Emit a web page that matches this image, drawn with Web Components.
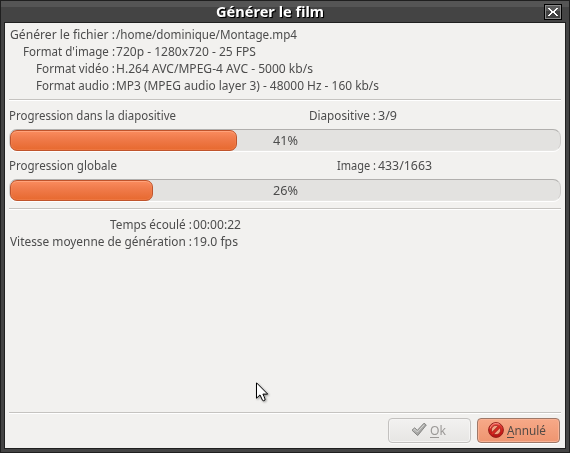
<!DOCTYPE html>
<html lang="fr">
<head>
<meta charset="utf-8">
<title>Générer le film</title>
<style>
html,body{margin:0;width:570px;height:453px;overflow:hidden}
body{font:13px/17px "Noto Sans","Open Sans",sans-serif;color:#4c4c4c}
</style>
</head>
<body>
<render-dialog></render-dialog>
<script>
const define = (name, html, setup) => customElements.define(name, class extends HTMLElement {
  connectedCallback() {
    if (this.shadowRoot) return;
    this.attachShadow({mode: 'open'}).innerHTML = html;
    if (setup) setup.call(this, this.shadowRoot);
  }
});

/* A line of text condensed or widened to a given width. */
define('fit-text', `<style>
:host{display:block;white-space:pre;height:17px;flex:none}
span{display:inline-block;transform-origin:0 0;white-space:pre}
u{text-decoration:none;box-shadow:0 -1px 0 currentColor inset;display:inline-block;height:16px}
</style><span></span>`, function (root) {
  const span = root.querySelector('span');
  const text = this.getAttribute('text');
  if (this.hasAttribute('mnemonic')) {
    const u = document.createElement('u');
    u.textContent = text[0];
    span.append(u, text.slice(1));
  } else span.textContent = text;
  const w = +this.getAttribute('w');
  this.style.width = w + 'px';
  span.style.transform = `scaleX(${w / span.getBoundingClientRect().width})`;
});

define('h-rule', `<style>:host{display:block;height:1px;background:#c5c3c0;border-bottom:1px solid #fff;flex:none}</style>`);

define('info-row', `<style>
:host{display:flex;height:17px;gap:1px}
div{width:var(--label,106px);display:flex;justify-content:flex-end}
</style><div><slot name="label"></slot></div><slot></slot>`);

define('progress-track', `<style>
:host{display:grid;height:22px;box-sizing:border-box;border-radius:8px;background:#e3e2e0;
 border:1px solid #cfcdcb;border-top-color:#b1afad;border-bottom-color:#e6e5e3;box-shadow:0 1px 0 #fff;align-items:center}
i{grid-area:1/1;box-sizing:border-box;height:21px;margin:0;width:var(--fill);border:1px solid #c0542b;border-radius:7px;
 background:linear-gradient(#fa8c5e,#f07b4b 40%,#e7692f);box-shadow:inset 0 1px 0 #ffa27a,inset 0 0 0 1px #f5895a66}
div{grid-area:1/1;justify-self:center;padding-left:1px}
</style><i></i><div><slot></slot></div>`, function () {
  this.style.setProperty('--fill', this.getAttribute('fill') + 'px');
});

define('close-button', `<style>
:host{display:block;box-sizing:border-box;width:18px;height:16px;border:1px solid #000;background:#8b8b8b;padding:1px}
div{height:12px;background:linear-gradient(#5a5a5a 0 5px,#414141 5px);display:grid;place-items:center}
svg{display:block}
</style><div><svg width="10" height="8" viewBox="0 0 10 8" fill="#fff" shape-rendering="crispEdges"><path d="M0 0h2v1h1v1h1v1h2V2h1V1h1V0h2v1H9v1H8v1H7v2h1v1h1v1h1v1H8V7H7V6H6V5H4v1H3v1H2v1H0V7h1V6h1V5h1V3H2V2H1V1H0z"/></svg></div>`);

define('push-button', `<style>
:host{display:flex;box-sizing:border-box;width:83px;height:25px;border:1px solid #c3c1bf;border-radius:4px;
 background:linear-gradient(#f2f1f0,#e7e6e4);align-items:flex-start;gap:var(--gap,3px);padding:3px 0 0 var(--pad,22px);
 color:#9a9896;box-shadow:inset 0 0 0 1px #f5f4f3,0 1px 0 #fbfbfa}
:host([primary]){border-color:#9e7868;background:linear-gradient(#f7a988,#ee9570);color:#544b46;--pad:10px;
 box-shadow:inset 0 0 0 1px #f9b294,0 1px 0 #fff}
</style><slot></slot>`);

define('apply-icon', `<style>:host{display:block;width:16px;height:16px}svg{display:block}</style>
<svg width="16" height="16" viewBox="0 0 16 16"><defs><linearGradient id="g" x2="1" y2="1"><stop stop-color="#c8c8c7"/><stop offset="1" stop-color="#929290"/></linearGradient></defs>
<path d="M1 8.2 3.7 5.8 6.3 8.4 13 1.2 15.3 3 6.7 13.6Z" fill="url(#g)" stroke="#858583" stroke-linejoin="round"/><path d="m2.6 8.2 1.1-1 2.7 2.7 6.8-7.2" fill="none" stroke="#dededc" stroke-width=".8"/></svg>`);

define('stop-icon', `<style>:host{display:block;width:16px;height:16px}svg{display:block}</style>
<svg width="16" height="16" viewBox="0 0 16 16"><defs><linearGradient id="g" x2="0" y2="1"><stop stop-color="#ef5a50"/><stop offset=".5" stop-color="#d4201c"/><stop offset="1" stop-color="#b31212"/></linearGradient></defs>
<circle cx="8" cy="8" r="7.4" fill="url(#g)" stroke="#93201a"/>
<circle cx="8" cy="8" r="4.6" fill="#f0a484" stroke="#8d1712" stroke-width=".6"/>
<path d="m4.8 11.2 6.4-6.4" stroke="#8d1712" stroke-width="3"/><path d="m4 12 8-8" stroke="#d62a22" stroke-width="2.1"/>
<path d="M2.2 6.3C3.3 2.6 7-.1 11.6 2.4" fill="none" stroke="#f6968a" stroke-width=".9"/></svg>`);

define('mouse-pointer', `<style>:host{position:absolute;left:255px;top:381px}svg{display:block;filter:drop-shadow(1px 1px 1px #0006)}</style>
<svg width="15" height="21" viewBox="0 0 15 21"><path d="M.5.8V16.2L4 12.9 6.5 18.3Q7.4 19.3 9 18 9.4 17.3 6.9 12.1H11.7Z" fill="#fff" stroke="#000"/></svg>`);

define('title-bar', `<style>
:host{display:flex;height:21px;background:linear-gradient(#555 0 6px,#444 6px);justify-content:flex-end;align-items:flex-start}
fit-text{margin:2px 220px 0 0;font-weight:bold;font-size:14px;color:#fff;text-shadow:1px 1px 0 #000,1px 1px 1px #000}
close-button{margin:3px 7px 0 0}
</style><fit-text text="Générer le film" w="108"></fit-text><close-button></close-button>`);

define('render-dialog', `<style>
:host{display:flex;flex-direction:column;box-sizing:border-box;width:570px;height:453px;border:1px solid #1f1f1f;background:#444;position:relative}
main{flex:1;margin:0 3px 3px;border:1px solid #202020;background:#f2f1ef;display:flex;flex-direction:column;padding:0 4px 5px;min-height:0}
.info{padding-top:3px;height:73px}
.line{height:17px;display:flex;padding:6px 0 0}
.line2{padding-top:5px}
.line info-row{margin-left:auto;width:252px;--label:68px}
progress-track{margin-top:5px;margin-bottom:1px}
.stats{padding-top:6px;flex:1;--label:183px}
.line info-row fit-text[slot]{margin-right:1px}
footer{display:flex;justify-content:flex-end;gap:6px;padding:4px 1px 0 0}
push-button fit-text{font-size:13px}
</style>
<title-bar></title-bar>
<main>
<section class="info">
<info-row><fit-text slot="label" text="Générer le fichier :" w="105"></fit-text><fit-text text="/home/dominique/Montage.mp4" w="181"></fit-text></info-row>
<info-row><fit-text slot="label" text="Format d'image :" w="92"></fit-text><fit-text text="720p - 1280x720 - 25 FPS" w="140"></fit-text></info-row>
<info-row><fit-text slot="label" text="Format vidéo :" w="79"></fit-text><fit-text text="H.264 AVC/MPEG-4 AVC - 5000 kb/s" w="197"></fit-text></info-row>
<info-row><fit-text slot="label" text="Format audio :" w="79"></fit-text><fit-text text="MP3 (MPEG audio layer 3) - 48000 Hz - 160 kb/s" w="263"></fit-text></info-row>
</section>
<h-rule></h-rule>
<div class="line"><fit-text text="Progression dans la diapositive" w="167"></fit-text><info-row><fit-text slot="label" text="Diapositive :" w="67"></fit-text><fit-text text="3/9" w="19"></fit-text></info-row></div>
<progress-track fill="227"><fit-text text="41%" w="25"></fit-text></progress-track>
<div class="line line2"><fit-text text="Progression globale" w="108"></fit-text><info-row><fit-text slot="label" text="Image :" w="39"></fit-text><fit-text text="433/1663" w="54"></fit-text></info-row></div>
<progress-track fill="143"><fit-text text="26%" w="25"></fit-text></progress-track>
<h-rule style="margin-top:6px"></h-rule>
<section class="stats">
<info-row><fit-text slot="label" text="Temps écoulé :" w="82"></fit-text><fit-text text="00:00:22" w="48"></fit-text></info-row>
<info-row><fit-text slot="label" text="Vitesse moyenne de génération :" w="182"></fit-text><fit-text text="19.0 fps" w="45"></fit-text></info-row>
</section>
<h-rule></h-rule>
<footer>
<push-button><apply-icon></apply-icon><fit-text mnemonic text="Ok" w="16"></fit-text></push-button>
<push-button primary><stop-icon></stop-icon><fit-text mnemonic text="Annulé" w="39"></fit-text></push-button>
</footer>
</main>
<mouse-pointer></mouse-pointer>`);
</script>
</body>
</html>
